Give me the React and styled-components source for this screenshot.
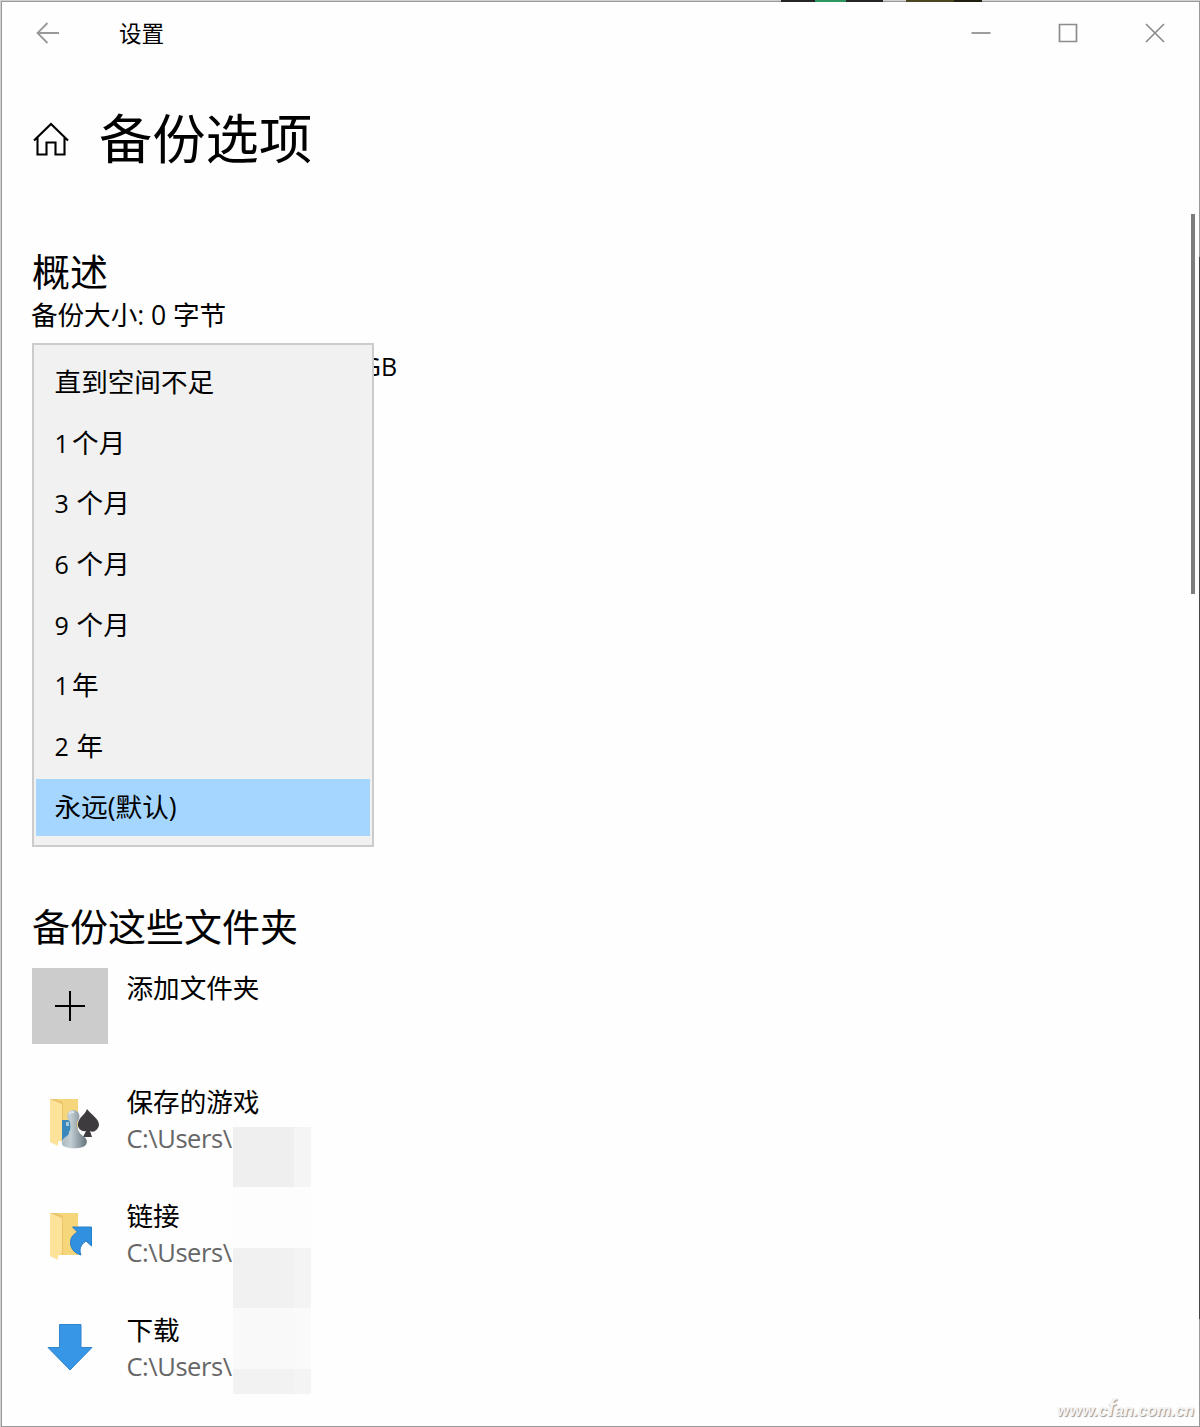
import React from 'react';
import styled, { createGlobalStyle } from 'styled-components';

const periods = [
    { count: '', label: '直到空间不足' },
    { count: '1', label: '个月' },
    { count: '3', label: '个月' },
    { count: '6', label: '个月' },
    { count: '9', label: '个月' },
    { count: '1', label: '年' },
    { count: '2', label: '年' },
    { count: '', label: '永远(默认)', selected: true },
];

const folders = [
    { name: '保存的游戏', path: 'C:\\Users\\', icon: <SavedGamesIcon /> },
    { name: '链接', path: 'C:\\Users\\', icon: <LinksIcon /> },
    { name: '下载', path: 'C:\\Users\\', icon: <DownloadsIcon /> },
];

const maskCells = [
    '#efefef', '#f5f5f5',
    '#fdfdfd', '#fdfdfd',
    '#f1f1f1', '#f4f4f4',
    '#f9f9f9', '#fafafa',
    '#f2f2f2', '#f4f4f4',
];

function FolderShape() {
    return (
        <>
            <path d="M18 17 H46 V59 H28 Z" fill="#f6d67a" />
            <path d="M18 17 H24 L31 20 V58 H18 Z" fill="#e9c46a" />
            <path d="M18 17 L30 22 V57 L26 60 V64 L18 60 Z" fill="#fde29a" />
        </>
    )
}

function SavedGamesIcon() {
    return (
        <svg width="76" height="76" viewBox="0 0 76 76">
            <defs>
                <linearGradient id="pawn" x1="0" x2="1">
                    <stop offset="0" stopColor="#a9bac3" />
                    <stop offset=".35" stopColor="#c3ced4" />
                    <stop offset="1" stopColor="#65727a" />
                </linearGradient>
            </defs>
            <FolderShape />
            <path d="M30 38 H43 V58 H30 Z" fill="#3987bd" />
            <path d="M34 40 h3 v4 h-3 Z M37 49 h3 v3 h-3 Z" fill="#a9cbd9" />
            <path d="M55 27 C59 33 67 36 67 43 C66 48 62 51 58 49 L60 55 H51 L54 49 C49 50 45 46 46 41 C47 35 53 33 55 27 Z" fill="#3d3b3e" />
            <path d="M38 40 C34 36 34 29 40 28 C47 27 50 35 45 40 C45 48 47 51 51 54 C56 57 56 62 52 64.5 C47 67 37 67 31 64 C28 60 31 56 35 54 C38 51 39 47 38 40 Z" fill="url(#pawn)" />
            <path d="M37 32 C38 30 40 29.5 42 30.5" stroke="#dde5e8" strokeWidth="2" fill="none" />
        </svg>
    )
}

function LinksIcon() {
    return (
        <svg width="76" height="76" viewBox="0 0 76 76">
            <FolderShape />
            <path d="M40.5 31 H59.5 V50 L54 45 C48 49 47 54 49 59 C41 57 37 50 39 43 C40 40 42 38 45.5 36 Z" fill="#3190df" stroke="#287fc9" />
        </svg>
    )
}

function DownloadsIcon() {
    return (
        <svg width="76" height="76" viewBox="0 0 76 76">
            <path d="M27.5 14.5 H49 V37.5 H60 L38 60 L16 37.5 H27.5 Z" fill="#3796e5" stroke="#2f86cf" />
        </svg>
    )
}

function App() {
    return (
        <>
            <GlobalStyle />
            <Desktop>
                <Backdrop>
                    <Strip $left={781} $width={34} $color="#252525" />
                    <Strip $left={815} $width={31} $color="#2c9560" />
                    <Strip $left={846} $width={37} $color="#252525" />
                    <Strip $left={906} $width={48} $color="#4b4620" />
                    <Strip $left={954} $width={28} $color="#211f12" />
                </Backdrop>
                <WindowFrame>
                    <TitleBar>
                        <BackButton>
                            <svg width="24" height="22" viewBox="0 0 24 22" fill="none" stroke="#999" strokeWidth="1.8">
                                <path d="M1 11 H23 M11.5 1 L1.5 11 L11.5 21" />
                            </svg>
                        </BackButton>
                        <AppName>设置</AppName>
                        <WindowButtons>
                            <svg width="20" height="20" viewBox="0 0 20 20" fill="none" stroke="#8c8c8c" strokeWidth="1.7">
                                <path d="M.5 10 H19.5" />
                            </svg>
                            <svg width="20" height="20" viewBox="0 0 20 20" fill="none" stroke="#8c8c8c" strokeWidth="1.7">
                                <path d="M1.5 1.5 H18.5 V18.5 H1.5 Z" />
                            </svg>
                            <svg width="20" height="20" viewBox="0 0 20 20" fill="none" stroke="#8c8c8c" strokeWidth="1.7">
                                <path d="M1 1 L19 19 M19 1 L1 19" />
                            </svg>
                        </WindowButtons>
                    </TitleBar>
                    <PageHeader>
                        <svg width="36" height="36" viewBox="0 0 36 36" fill="none" stroke="#000" strokeWidth="2.1">
                            <path d="M1 19.5 L18 3 L35 19.5 M4.5 16.5 V33.5 H13.5 V21.5 H22.5 V33.5 H31.5 V16.5" />
                        </svg>
                        <PageTitle>备份选项</PageTitle>
                    </PageHeader>
                    <Overview>
                        <SectionTitle>概述</SectionTitle>
                        <BodyLine>备份大小: 0 字节</BodyLine>
                        <SpaceLine>GB</SpaceLine>
                        <PeriodMenu>
                            {periods.map((period, i) => (
                                <PeriodItem key={i} $selected={period.selected}>
                                    {period.count && <Count $narrow={period.count === '1'}>{period.count}</Count>}
                                    {period.label}
                                </PeriodItem>
                            ))}
                        </PeriodMenu>
                    </Overview>
                    <Folders>
                        <SectionTitle>备份这些文件夹</SectionTitle>
                        <FolderList>
                            <FolderRow>
                                <AddButton>
                                    <svg width="32" height="32" viewBox="0 0 32 32" stroke="#000" strokeWidth="2">
                                        <path d="M1 16 H31 M16 1 V31" />
                                    </svg>
                                </AddButton>
                                <FolderName>添加文件夹</FolderName>
                            </FolderRow>
                            {folders.map((folder) => (
                                <FolderRow key={folder.name}>
                                    {folder.icon}
                                    <div>
                                        <FolderName>{folder.name}</FolderName>
                                        <FolderPath>{folder.path}</FolderPath>
                                    </div>
                                </FolderRow>
                            ))}
                        </FolderList>
                        <NameMask>
                            {maskCells.map((color, i) => <MaskCell key={i} $color={color} />)}
                        </NameMask>
                    </Folders>
                    <ScrollThumb />
                    <Watermark>www.c<b>f</b>an.com.cn</Watermark>
                </WindowFrame>
                <EdgeShade />
            </Desktop>
        </>
    )
}

const GlobalStyle = createGlobalStyle`
    *{
        box-sizing: border-box;
    }

    body{
        margin: 0;
        background: #fff;
        color: #000;
        font-family: 'Open Sans', 'Noto Sans CJK SC', sans-serif;
    }

    svg{
        display: block;
        flex: none;
    }
`;

const Desktop = styled.div`
    position: relative;
    width: 1200px;
    height: 1427px;
    padding: 1px 0 0 1px;
    background: #d0d0d0;
    overflow: hidden;
`;

const Backdrop = styled.div`
    position: absolute;
    inset: 0 0 auto 0;
    z-index: 1;
    height: 2px;
`;

const Strip = styled.div`
    position: absolute;
    left: ${(props) => props.$left}px;
    width: ${(props) => props.$width}px;
    height: 2px;
    background: ${(props) => props.$color};
`;

const WindowFrame = styled.main`
    position: relative;
    height: 1426px;
    border: 1px solid #999;
    background: #fefefe;
`;

/* darker stretch where the desktop shows behind the right border */
const EdgeShade = styled.div`
    position: absolute;
    top: 257px;
    right: 0;
    width: 1px;
    height: 1062px;
    background: #444;
`;

const TitleBar = styled.header`
    display: flex;
    align-items: center;
    height: 61px;
    padding: 0 34px 0 34px;
`;

const BackButton = styled.div`
    width: 83px;
`;

const AppName = styled.div`
    padding-top: 2px;
    font-size: 22.6px;
    line-height: 32px;
`;

const WindowButtons = styled.div`
    display: flex;
    gap: 67px;
    margin-left: auto;
`;

const PageHeader = styled.div`
    display: flex;
    align-items: center;
    gap: 30px;
    height: 151px;
    padding-left: 31px;
`;

const PageTitle = styled.h1`
    margin: 0;
    font-size: 53.3px;
    font-weight: 400;
    line-height: 80px;
`;

const Overview = styled.section`
    position: relative;
    height: 687px;
    padding: 32px 0 0 30px;
`;

const SectionTitle = styled.h2`
    margin: 0;
    font-size: 38px;
    font-weight: 400;
    line-height: 50px;
`;

const BodyLine = styled.p`
    margin: 1px 0 0 -1px;
    font-size: 26.6px;
    line-height: 36px;
    letter-spacing: -0.05px;
`;

const SpaceLine = styled(BodyLine)`
    width: 366px;
    margin-top: 15px;
    font-size: 25px;
    text-align: right;
`;

const PeriodMenu = styled.ul`
    position: absolute;
    left: 30px;
    top: 129px;
    display: flex;
    flex-direction: column;
    gap: 3.7px;
    width: 342px;
    height: 504px;
    margin: 0;
    padding: 9px 2px;
    border: 2px solid #ccc;
    background: #f1f1f1;
    list-style: none;
`;

const PeriodItem = styled.li`
    flex: none;
    height: 57px;
    padding-left: 18.6px;
    background: ${(props) => props.$selected ? '#a5d6ff' : 'transparent'};
    font-size: 26.6px;
    line-height: 56px;
    white-space: nowrap;
`;

const Count = styled.span`
    display: inline-block;
    width: ${(props) => props.$narrow ? 17.5 : 22}px;
    font-size: 25px;
`;

const Folders = styled.section`
    position: relative;
    padding-left: 30px;
`;

const FolderList = styled.div`
    display: flex;
    flex-direction: column;
    gap: 38px;
    margin-top: 17px;
`;

const FolderRow = styled.div`
    display: flex;
    gap: 18.5px;
    height: 76px;
`;

const AddButton = styled.div`
    display: flex;
    align-items: center;
    justify-content: center;
    width: 76px;
    height: 76px;
    background: #ccc;
`;

const FolderName = styled.div`
    padding-top: 2px;
    font-size: 26.6px;
    line-height: 36px;
`;

const FolderPath = styled.div`
    color: #666;
    font-size: 25.5px;
    line-height: 36px;
    letter-spacing: -0.45px;
`;

const NameMask = styled.div`
    position: absolute;
    left: 231px;
    top: 226px;
    display: grid;
    grid-template-columns: 61px 17px;
    grid-template-rows: 60px 61px 60px 61px 25px;
`;

const MaskCell = styled.div`
    background: ${(props) => props.$color};
`;

const ScrollThumb = styled.div`
    position: absolute;
    top: 212px;
    right: 4px;
    width: 4px;
    height: 380px;
    background: #7d7d7d;
`;

const Watermark = styled.div`
    position: absolute;
    right: 5px;
    bottom: 3px;
    color: #f4f4f4;
    font-family: 'Liberation Sans', sans-serif;
    font-size: 16px;
    font-style: italic;
    font-weight: 700;
    line-height: 24px;
    text-shadow: 1px 1px 1px #999;

    b{
        font-size: 23px;
    }
`;

export default App
